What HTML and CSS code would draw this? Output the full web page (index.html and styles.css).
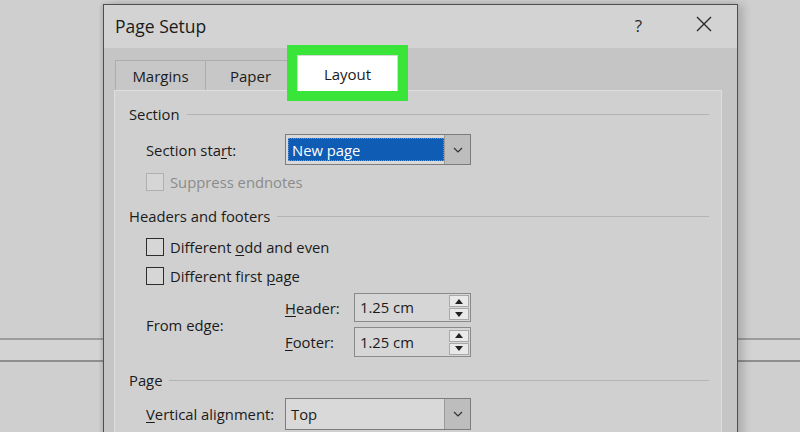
FILE: index.html
```html
<!DOCTYPE html>
<html>
<head>
<meta charset="utf-8">
<link rel="stylesheet" href="styles.css">
</head>
<body>
<div class="dialog">
  <div class="titlebar">
    <span class="title">Page Setup</span>
    <span class="help">?</span>
    <span class="close"><svg width="16" height="16" viewBox="0 0 16 16"><path d="M1 1 L15 15 M15 1 L1 15" stroke="#2a2a2a" stroke-width="1.4" fill="none"/></svg></span>
  </div>
  <div class="dbody">
    <div class="tabs">
      <div class="tab first">Margins</div>
      <div class="tab">Paper</div>
      <div class="tab active">Layout</div>
    </div>
    <div class="panel">
      <div class="ghead ghead-section"><span>Section</span><span class="rule"></span></div>
      <div class="row row-start">
        <span class="label">Section sta<u>r</u>t:</span>
        <div class="select">
          <div class="value"><span class="sel">New page</span></div>
          <div class="arrow"><svg width="10" height="6" viewBox="0 0 10 6"><path d="M1 1 L5 5 L9 1" stroke="#333" stroke-width="1.2" fill="none"/></svg></div>
        </div>
      </div>
      <div class="row check disabled row-suppress"><span class="box"></span><span>Suppress endnotes</span></div>

      <div class="ghead ghead-hf"><span>Headers and footers</span><span class="rule"></span></div>
      <div class="row check row-odd"><span class="box"></span><span>Different <u>o</u>dd and even</span></div>
      <div class="row check row-first"><span class="box"></span><span>Different first <u>p</u>age</span></div>
      <div class="edge">
        <span class="edge-label">From edge:</span>
        <div class="spins">
          <div class="spinrow">
            <span class="slabel"><u>H</u>eader:</span>
            <div class="spin"><span class="sval">1.25 cm</span><div class="sbtns"><span class="sb"><svg width="8" height="5" viewBox="0 0 8 5"><path d="M0 5 L4 0 L8 5 Z" fill="#222"/></svg></span><span class="sb"><svg width="8" height="5" viewBox="0 0 8 5"><path d="M0 0 L4 5 L8 0 Z" fill="#222"/></svg></span></div></div>
          </div>
          <div class="spinrow spinrow2">
            <span class="slabel"><u>F</u>ooter:</span>
            <div class="spin"><span class="sval">1.25 cm</span><div class="sbtns"><span class="sb"><svg width="8" height="5" viewBox="0 0 8 5"><path d="M0 5 L4 0 L8 5 Z" fill="#222"/></svg></span><span class="sb"><svg width="8" height="5" viewBox="0 0 8 5"><path d="M0 0 L4 5 L8 0 Z" fill="#222"/></svg></span></div></div>
          </div>
        </div>
      </div>

      <div class="ghead ghead-page"><span>Page</span><span class="rule"></span></div>
      <div class="row row-valign">
        <span class="label"><u>V</u>ertical alignment:</span>
        <div class="select tall">
          <div class="value"><span class="plain">Top</span></div>
          <div class="arrow"><svg width="10" height="6" viewBox="0 0 10 6"><path d="M1 1 L5 5 L9 1" stroke="#333" stroke-width="1.2" fill="none"/></svg></div>
        </div>
      </div>
    </div>
  </div>
</div>
</body>
</html>
```

FILE: styles.css
```css
html, body {
  margin: 0;
  padding: 0;
}
body {
  width: 800px;
  height: 432px;
  overflow: hidden;
  font-family: "Open Sans", "Noto Sans", sans-serif;
  color: #1b1b1b;
  background:
    linear-gradient(to bottom,
      transparent 338px, #9c9c9c 338px, #9c9c9c 340px,
      #d3d3d3 340px, #d3d3d3 360px,
      #8e8e8e 360px, #8e8e8e 362px, transparent 362px),
    #cfcfcf;
}
.dialog {
  margin-left: 103px;
  margin-top: 4px;
  width: 635px;
  height: 460px;
  box-sizing: border-box;
  border: 1px solid #4f4f4f;
  border-bottom: none;
  background: #c5c5c5;
  box-shadow: 5px 0 9px rgba(0, 0, 0, 0.18), -2px 0 3px rgba(0, 0, 0, 0.1);
}
.titlebar {
  height: 43px;
  background: #d3d3d3;
  display: flex;
  align-items: center;
}
.title {
  margin-left: 11px;
  font-size: 17.5px;
  margin-top: -1px;
}
.help {
  margin-left: auto;
  font-size: 17px;
  color: #2a2a2a;
  margin-right: 54px;
  margin-top: -3px;
}
.close {
  display: flex;
  margin-right: 25px;
  margin-top: -5px;
}
.dbody {
  padding-top: 12px;
}
.tabs {
  display: flex;
  align-items: flex-end;
  height: 30px;
  padding-left: 11px;
  position: relative;
  z-index: 2;
}
.tab {
  box-sizing: border-box;
  height: 30px;
  width: 90px;
  border-top: 1px solid #adadad;
  border-right: 1px solid #adadad;
  background: #c7c7c7;
  font-size: 15px;
  display: flex;
  align-items: center;
  justify-content: center;
  padding-top: 1px;
}
.tab.first {
  width: 91px;
  border-left: 1px solid #adadad;
}
.tab.active {
  width: 101px;
  height: 36px;
  margin-left: 1px;
  margin-bottom: -1px;
  background: #ffffff;
  border: 1px solid #d8d8d8;
  border-bottom: none;
  outline: 10px solid #38e538;
  outline-offset: 0;
  padding-top: 1px;
  padding-bottom: 0;
}
.panel {
  margin-left: 10px;
  width: 608px;
  height: 360px;
  box-sizing: border-box;
  border: 1px solid #dedede;
  background: #d0d0d0;
  padding: 13px 12px 0 14px;
  font-size: 14.8px;
  line-height: 20px;
}
.ghead {
  display: flex;
  align-items: center;
  height: 20px;
  gap: 7px;
}
.ghead .rule {
  flex: 1;
  height: 1px;
  background: #b3b3b3;
}
.ghead-hf { margin-top: 14px; }
.ghead-page { margin-top: 13px; }
.row {
  display: flex;
  align-items: center;
  padding-left: 17px;
}
.label {
  width: 139px;
  flex: none;
}
.row-start { margin-top: 10px; }
.row-suppress { margin-top: 7px; height: 20px; }
.row-odd { margin-top: 11px; height: 20px; }
.row-first { margin-top: 9px; height: 20px; }
.row-valign { margin-top: 8px; }
.select {
  width: 186px;
  height: 31px;
  box-sizing: border-box;
  border: 1px solid #7c7c7c;
  background: #d9d9d9;
  display: flex;
}
.select.tall { height: 32px; }
.select .value {
  flex: 1;
  display: flex;
  padding: 3px 0 3px 2px;
}
.sel {
  flex: 1;
  background: #0e5cb4;
  color: #ffffff;
  padding-left: 3px;
  display: flex;
  align-items: center;
  border: 1px dotted #6a8fc8;
}
.plain {
  display: flex;
  align-items: center;
  padding-left: 3px;
}
.arrow {
  width: 25px;
  border-left: 1px solid #9a9a9a;
  background: #bdbdbd;
  display: flex;
  align-items: center;
  justify-content: center;
}
.check {
  gap: 6px;
}
.box {
  width: 18px;
  height: 18px;
  box-sizing: border-box;
  border: 1px solid #2d2d2d;
  background: #d6d6d6;
  flex: none;
}
.disabled { color: #8b8b8b; }
.disabled .box { border-color: #b0b0b0; }
.edge {
  display: flex;
  align-items: center;
  padding-left: 17px;
  margin-top: 7px;
}
.edge-label {
  width: 139px;
  flex: none;
}
.spinrow {
  display: flex;
  align-items: center;
}
.spinrow2 { margin-top: 5px; }
.slabel {
  width: 69px;
}
.spin {
  width: 117px;
  height: 29px;
  box-sizing: border-box;
  border: 1px solid #8a8a8a;
  background: #d6d6d6;
  display: flex;
  align-items: center;
}
.spinrow2 .spin { height: 30px; }
.sval {
  flex: 1;
  padding-left: 5px;
  padding-bottom: 1px;
}
.sbtns {
  width: 20px;
  height: 25px;
  margin-right: 1px;
  display: flex;
  flex-direction: column;
  gap: 1px;
}
.sb {
  flex: 1;
  background: #e9e9e9;
  border: 1px solid #a9a9a9;
  display: flex;
  align-items: center;
  justify-content: center;
}
u {
  text-underline-offset: 2px;
}
```
